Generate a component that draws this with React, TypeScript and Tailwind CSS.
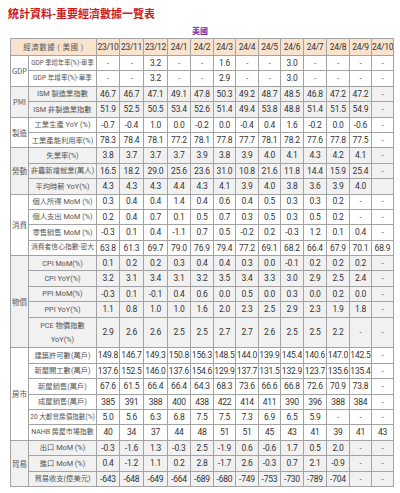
import React from "react";

type Row = { label: React.ReactNode; vals: string[]; tall?: boolean; fs?: string };
type Group = { name: string; rows: Row[] };

const cols = ["23/10", "23/11", "23/12", "24/1", "24/2", "24/3", "24/4", "24/5", "24/6", "24/7", "24/8", "24/9", "24/10"];
// widths of the month columns, written out so tailwind picks them up
const colW = ["w-[23px]", "w-[24px]", "w-[24px]", "w-[23px]", "w-[23px]", "w-[22px]", "w-[23px]", "w-[22px]", "w-[23px]", "w-[23px]", "w-[23px]", "w-[22px]", "w-[22px]"];

const s = (t: string) => t.split(" ");

const groups: Group[] = [
  {
    name: "GDP",
    rows: [
      { label: "GDP 季增年率(%)-單季", fs: "text-[6.3px]", vals: s("- - 3.2 - - 1.6 - - 3.0 - - - -") },
      { label: "GDP 年增率(%)-單季", fs: "text-[6.6px]", vals: s("- - 3.2 - - 2.9 - - 3.0 - - - -") },
    ],
  },
  {
    name: "PMI",
    rows: [
      { label: "ISM 製造業指數", vals: s("46.7 46.7 47.1 49.1 47.8 50.3 49.2 48.7 48.5 46.8 47.2 47.2 -") },
      { label: "ISM 非製造業指數", vals: s("51.9 52.5 50.5 53.4 52.6 51.4 49.4 53.8 48.8 51.4 51.5 54.9 -") },
    ],
  },
  {
    name: "製造",
    rows: [
      { label: "工業生產 YoY (%)", vals: s("-0.7 -0.4 1.0 0.0 -0.2 0.0 -0.4 0.4 1.6 -0.2 0.0 -0.6 -") },
      { label: "工業產能利用率(%)", vals: s("78.3 78.4 78.1 77.2 78.1 77.8 77.7 78.1 78.2 77.6 77.8 77.5 -") },
    ],
  },
  {
    name: "勞動",
    rows: [
      { label: "失業率(%)", vals: s("3.8 3.7 3.7 3.7 3.9 3.8 3.9 4.0 4.1 4.3 4.2 4.1 -") },
      { label: "非農新增就業(萬人)", vals: s("16.5 18.2 29.0 25.6 23.6 31.0 10.8 21.6 11.8 14.4 15.9 25.4 -") },
      { label: "平均時薪 YoY(%)", vals: [...s("4.3 4.3 4.3 4.4 4.3 4.1 3.9 4.0 3.8 3.6 3.9 4.0"), ""] },
    ],
  },
  {
    name: "消費",
    rows: [
      { label: "個人所得 MoM (%)", vals: s("0.3 0.4 0.4 1.4 0.4 0.6 0.4 0.5 0.3 0.3 0.2 - -") },
      { label: "個人支出 MoM (%)", vals: s("0.2 0.4 0.7 0.1 0.5 0.7 0.3 0.5 0.3 0.5 0.2 - -") },
      { label: "零售銷售 MoM (%)", vals: s("-0.3 0.1 0.4 -1.1 0.7 0.5 -0.2 0.2 -0.3 1.2 0.1 0.4 -") },
      { label: "消費者信心指數-密大", fs: "text-[6.8px]", vals: s("63.8 61.3 69.7 79.0 76.9 79.4 77.2 69.1 68.2 66.4 67.9 70.1 68.9") },
    ],
  },
  {
    name: "物價",
    rows: [
      { label: "CPI MoM(%)", vals: s("0.1 0.2 0.2 0.3 0.4 0.4 0.3 0.0 -0.1 0.2 0.2 0.2 -") },
      { label: "CPI YoY(%)", vals: s("3.2 3.1 3.4 3.1 3.2 3.5 3.4 3.3 3.0 2.9 2.5 2.4 -") },
      { label: "PPI MoM(%)", vals: s("-0.3 0.1 -0.1 0.4 0.6 0.0 0.5 0.0 0.3 0.0 0.2 0.0 -") },
      { label: "PPI YoY(%)", vals: s("1.1 0.8 1.0 1.0 1.6 2.0 2.3 2.5 2.9 2.3 1.9 1.8 -") },
      {
        label: (
          <>
            PCE 物價指數
            <br />
            YoY(%)
          </>
        ),
        tall: true,
        vals: s("2.9 2.6 2.6 2.5 2.5 2.7 2.7 2.6 2.5 2.5 2.2 - -"),
      },
    ],
  },
  {
    name: "房市",
    rows: [
      { label: "建築許可數(萬戶)", vals: s("149.8 146.7 149.3 150.8 156.3 148.5 144.0 139.9 145.4 140.6 147.0 142.5 -") },
      { label: "新屋開工數(萬戶)", vals: s("137.6 152.5 146.0 137.6 154.6 129.9 137.7 131.5 132.9 123.7 135.6 135.4 -") },
      { label: "新屋銷售(萬戶)", vals: s("67.6 61.5 66.4 66.4 64.3 68.3 73.6 66.6 66.8 72.6 70.9 73.8 -") },
      { label: "成屋銷售(萬戶)", vals: s("385 391 388 400 438 422 414 411 390 396 388 384 -") },
      { label: "20 大都會房價指數(%)", fs: "text-[6.6px]", vals: s("5.0 5.6 6.3 6.8 7.5 7.5 7.3 6.9 6.5 5.9 - - -") },
      { label: "NAHB 房屋市場指數", fs: "text-[7px]", vals: s("40 34 37 44 48 51 51 45 43 41 39 41 43") },
    ],
  },
  {
    name: "貿易",
    rows: [
      { label: "出口 MoM (%)", vals: s("-0.3 -1.6 1.3 -0.3 2.5 -1.9 0.6 -0.6 1.7 0.5 2.0 - -") },
      { label: "進口 MoM (%)", vals: s("0.4 -1.2 1.1 0.2 2.8 -1.7 2.6 -0.3 0.7 2.1 -0.9 - -") },
      { label: "貿易收支(億美元)", vals: s("-643 -648 -649 -664 -689 -680 -749 -753 -730 -789 -704 - -") },
    ],
  },
];

const cell = "border border-[#a3a3a3] p-0 text-center whitespace-nowrap overflow-hidden";
const cjk = "font-['Noto_Sans_CJK_TC',sans-serif]";
const num = "font-['Roboto','Noto_Sans_CJK_TC',sans-serif]";

export default function App() {
  return (
    <div className="w-[400px] h-[493px] bg-white overflow-hidden">
      <div className={`pt-[6px] pl-[8px] text-[11px] leading-[14px] font-bold text-[#cc1a1a] ${cjk}`}>
        統計資料-重要經濟數據一覽表
      </div>
      <div className={`mt-[4px] text-center text-[8px] leading-[14px] font-bold text-[#7030a0] ${cjk}`}>
        美國
      </div>
      <table className={`ml-[10px] w-[383px] table-fixed border-collapse text-[#333] ${num}`}>
        <colgroup>
          <col className="w-[18px]" />
          <col className="w-[68px]" />
          {colW.map((w, i) => (
            <col key={i} className={w} />
          ))}
        </colgroup>
        <thead>
          <tr className="h-[17px] bg-[#f9e3cf]">
            <th colSpan={2} className={`${cell} ${cjk} text-[7.5px] font-normal text-[#555] tracking-[0.5px]`}>
              經濟數據 ( 美國 )
            </th>
            {cols.map((c) => (
              <th key={c} className={`${cell} text-[8.5px] font-normal tracking-[-0.3px]`}>
                {c}
              </th>
            ))}
          </tr>
        </thead>
        <tbody>
          {groups.map((g, gi) =>
            g.rows.map((r, ri) => (
              <tr key={g.name + ri} className={`${r.tall ? "h-[30.8px]" : "h-[15.4px]"} ${gi % 2 === 1 ? "bg-[#f1f1f1]" : "bg-white"}`}>
                {ri === 0 && (
                  <td rowSpan={g.rows.length} className={`${cell} ${cjk} text-[7.5px] text-[#555]`}>
                    {g.name}
                  </td>
                )}
                <td className={`${cell} ${r.fs ?? "text-[7.3px]"} ${r.tall ? "leading-[14px]" : "leading-none"} text-[#555]`}>
                  {r.label}
                </td>
                {r.vals.map((v, vi) => (
                  <td key={vi} className={`${cell} text-[8.5px] leading-none tracking-[-0.2px] ${v === "-" ? "text-[#777]" : ""}`}>
                    {v}
                  </td>
                ))}
              </tr>
            ))
          )}
        </tbody>
      </table>
    </div>
  );
}
